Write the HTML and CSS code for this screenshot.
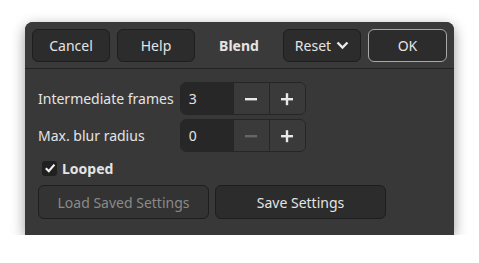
FILE: index.html
```html
<!DOCTYPE html>
<html lang="en">
  <head>
    <meta charset="UTF-8" />
    <title>Blend</title>
    <link rel="stylesheet" href="styles.css">
  </head>
  <body>
    <div class="window">
      <div class="header">
        <button class="btn">Cancel</button>
        <button class="btn">Help</button>
        <div class="title">Blend</div>
        <button class="btn reset">Reset
          <svg width="13" height="9" viewBox="0 0 13 9"><path d="M1.5 1.5 L6.5 6.5 L11.5 1.5" fill="none" stroke="#e8e8e8" stroke-width="2.4"/></svg>
        </button>
        <button class="btn ok">OK</button>
      </div>

      <div class="content">
        <div class="grid">
          <label>Intermediate frames</label>
          <div class="spin">
            <div class="entry">3</div>
            <div class="spin-btn">
              <svg width="14" height="14" viewBox="0 0 14 14"><rect x="1" y="6" width="12" height="2.4" fill="#e8e8e8"/></svg>
            </div>
            <div class="spin-btn">
              <svg width="14" height="14" viewBox="0 0 14 14"><rect x="1" y="6" width="12" height="2.4" fill="#e8e8e8"/><rect x="5.8" y="1.2" width="2.4" height="12" fill="#e8e8e8"/></svg>
            </div>
          </div>

          <label>Max. blur radius</label>
          <div class="spin">
            <div class="entry">0</div>
            <div class="spin-btn">
              <svg width="14" height="14" viewBox="0 0 14 14"><rect x="1" y="6" width="12" height="2.4" fill="#666"/></svg>
            </div>
            <div class="spin-btn">
              <svg width="14" height="14" viewBox="0 0 14 14"><rect x="1" y="6" width="12" height="2.4" fill="#e8e8e8"/><rect x="5.8" y="1.2" width="2.4" height="12" fill="#e8e8e8"/></svg>
            </div>
          </div>
        </div>

        <div class="check">
          <span class="box">
            <svg width="12" height="12" viewBox="0 0 12 12"><path d="M1.8 6.2 L4.8 9.2 L10.4 2.6" fill="none" stroke="#f2f2f2" stroke-width="2.2"/></svg>
          </span>
          <span>Looped</span>
        </div>

        <div class="actions">
          <button class="btn wide disabled">Load Saved Settings</button>
          <button class="btn wide">Save Settings</button>
        </div>
      </div>
    </div>
  </body>
</html>
```

FILE: styles.css
```css
body {
  margin: 0;
  background-color: #ffffff;
  font-family: "Noto Sans", "Open Sans", sans-serif;
  font-size: 14px;
  color: #e4e4e4;
}

.window {
  margin: 22px 0 0 25px;
  width: 429px;
  height: 213px;
  background-color: #383838;
  border-radius: 8px 8px 0 0;
  box-shadow: 0 4px 14px rgba(0, 0, 0, 0.4);
  overflow: hidden;
}

.header {
  display: flex;
  align-items: center;
  height: 47px;
  padding: 0 7px;
  gap: 7px;
  background-color: #3a3a3a;
  border-bottom: 1px solid #232323;
  box-sizing: border-box;
}

.btn {
  font-family: inherit;
  font-size: 14px;
  color: #e4e4e4;
  background-color: #2c2c2c;
  border: 1px solid #1e1e1e;
  border-radius: 6px;
  width: 78px;
  height: 33px;
  padding: 0;
  display: flex;
  align-items: center;
  justify-content: center;
  gap: 5px;
}

.title {
  flex: 1;
  text-align: center;
  font-weight: bold;
}

.ok {
  width: 79px;
  border: 1px solid #a8a8a8;
}

.content {
  padding: 13px 13px 0 13px;
}

.grid {
  display: grid;
  grid-template-columns: auto auto;
  justify-content: start;
  align-items: center;
  column-gap: 6px;
  row-gap: 4px;
}

.spin {
  display: flex;
  height: 33px;
  border: 1px solid #262626;
  border-radius: 6px;
  overflow: hidden;
  box-sizing: border-box;
}

.entry {
  width: 52px;
  background-color: #272727;
  padding-left: 8px;
  box-sizing: border-box;
  display: flex;
  align-items: center;
}

.spin-btn {
  width: 35px;
  background-color: #3a3a3a;
  border-left: 1px solid #262626;
  display: flex;
  align-items: center;
  justify-content: center;
}

.check {
  display: flex;
  align-items: center;
  gap: 5px;
  margin: 6px 0 0 4px;
  height: 20px;
  font-weight: bold;
}

.box {
  width: 15px;
  height: 15px;
  background-color: #202020;
  border-radius: 3px;
  display: flex;
  align-items: center;
  justify-content: center;
}

.actions {
  display: flex;
  gap: 6px;
  margin-top: 7px;
}

.wide {
  width: 171px;
  height: 34px;
}

.disabled {
  color: #8a8a8a;
  background-color: #333333;
}
```
